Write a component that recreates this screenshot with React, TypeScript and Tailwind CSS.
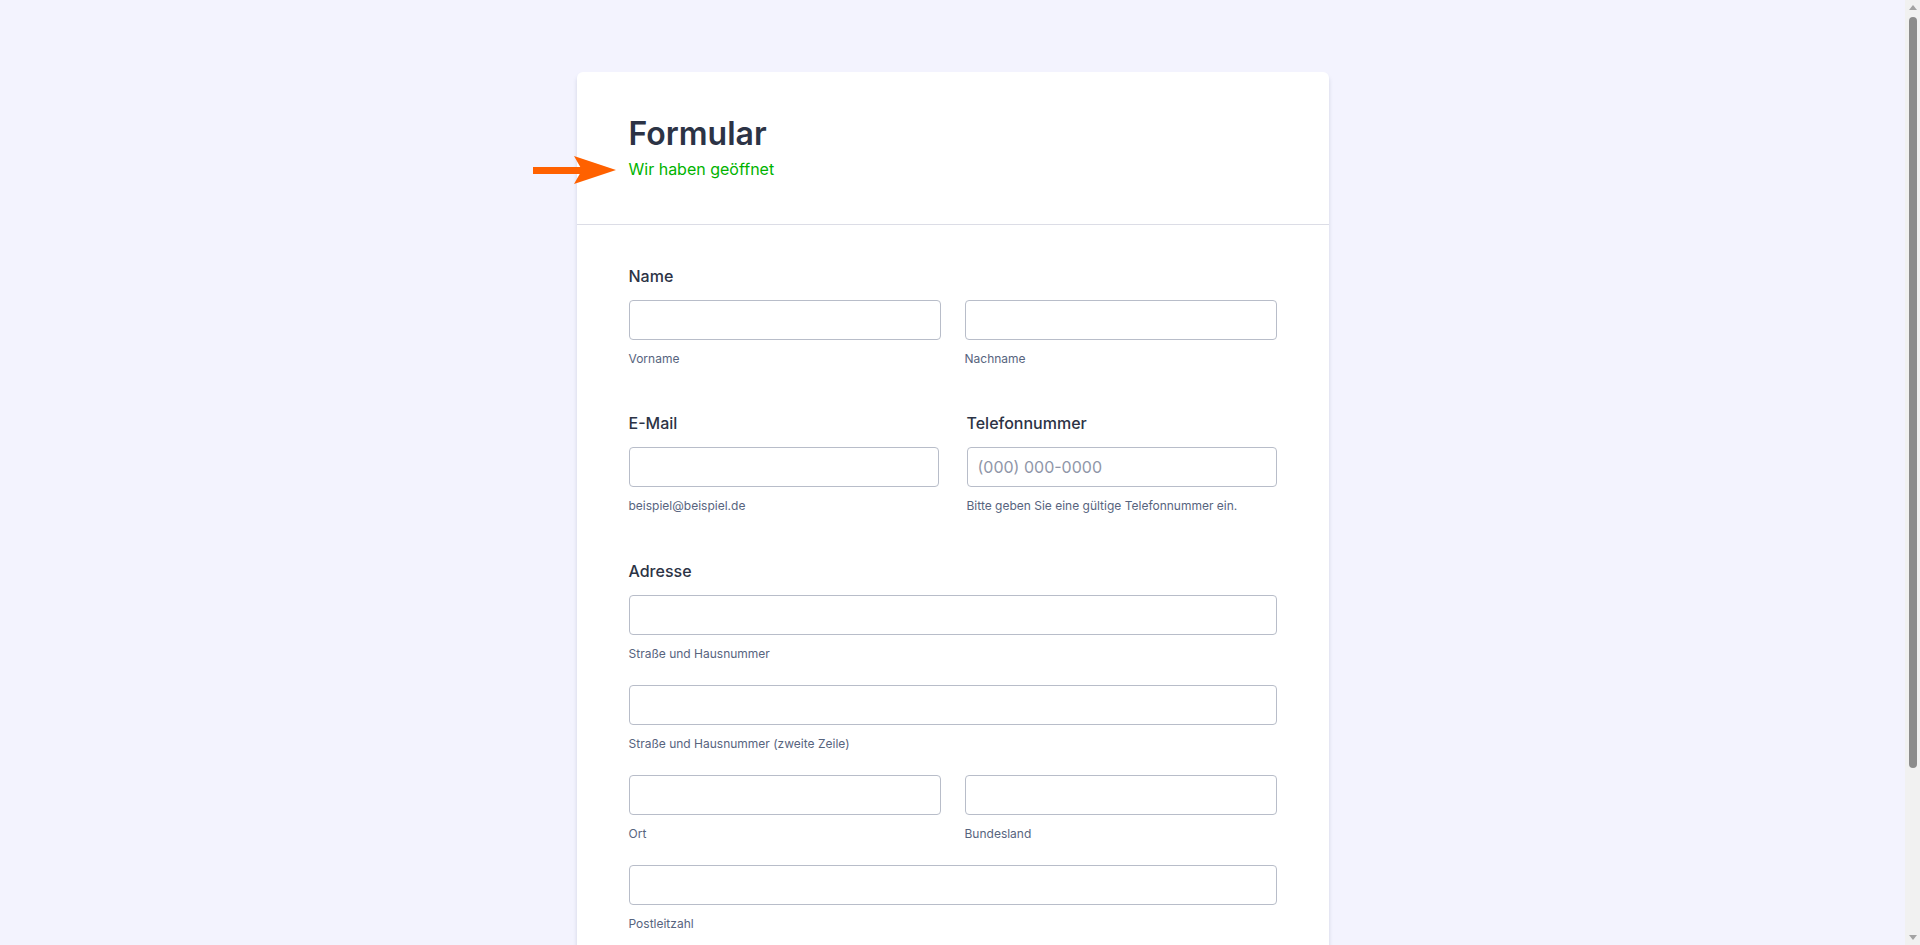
import React from "react";

const font = { fontFamily: "Inter, 'Noto Sans', Arial, sans-serif" };

function Field({ sub, placeholder }: { sub: string; placeholder?: string }) {
  return (
    <div className="flex flex-col">
      <input
        type="text"
        placeholder={placeholder}
        className="h-10 w-full rounded-[4px] border border-[#b8bdc9] bg-white px-[10px] text-base text-[#2c3345] placeholder:text-[#8f96a8] outline-none"
      />
      <span className="mt-[10px] text-xs leading-[18px] text-[#57647e]">{sub}</span>
    </div>
  );
}

function Label({ children }: { children: React.ReactNode }) {
  return <label className="mb-[12px] block text-base font-medium leading-6 text-[#2c3345]">{children}</label>;
}

function Arrow() {
  return (
    <svg
      className="absolute left-[-46px] top-[84px]"
      width="86"
      height="28"
      viewBox="0 0 86 28"
      aria-hidden="true"
    >
      <rect x="2" y="11" width="50" height="7" fill="#ff6100" />
      <polygon points="43,0 85,14 43,28 51,14" fill="#ff6100" />
    </svg>
  );
}

// the reference shows a classic browser scrollbar on the right
function Scrollbar() {
  return (
    <div className="fixed right-0 top-0 flex h-screen w-[15px] flex-col items-center bg-[#f1f1f1]">
      <div className="mt-[5px] h-0 w-0 border-x-[4px] border-b-[5px] border-x-transparent border-b-[#a3a3a3]" />
      <div className="mt-[7px] h-[751px] w-[8px] rounded-full bg-[#8c8c8c]" />
      <div className="mt-auto mb-[5px] h-0 w-0 border-x-[4px] border-t-[5px] border-x-transparent border-t-[#a3a3a3]" />
    </div>
  );
}

export default function App() {
  return (
    <div className="min-h-screen bg-[#f3f3fe] pt-[72px] pb-[60px] pr-[15px]" style={font}>
      <div className="mx-auto w-[752px] rounded-t-[6px] bg-white shadow-[0_4px_4px_rgba(87,100,126,0.21)]">
        <div className="relative border-b border-[#dcdde6] px-[52px] pt-[42px] pb-[43px]">
          <Arrow />
          <h1 className="text-[32px] font-semibold leading-10 text-[#2c3345]">Formular</h1>
          <p className="mt-[3px] text-base leading-6 text-[#00b300]">Wir haben geöffnet</p>
        </div>

        <div className="px-[52px] pt-[39px] pb-[80px]">
          <section>
            <Label>Name</Label>
            <div className="grid grid-cols-2 gap-6">
              <Field sub="Vorname" />
              <Field sub="Nachname" />
            </div>
          </section>

          <section className="mt-[43px] grid grid-cols-2 gap-x-[28px]">
            <div>
              <Label>E-Mail</Label>
              <Field sub="beispiel@beispiel.de" />
            </div>
            <div>
              <Label>Telefonnummer</Label>
              <Field sub="Bitte geben Sie eine gültige Telefonnummer ein." placeholder="(000) 000-0000" />
            </div>
          </section>

          <section className="mt-[44px] flex flex-col gap-[22px]">
            <div>
              <Label>Adresse</Label>
              <Field sub="Straße und Hausnummer" />
            </div>
            <Field sub="Straße und Hausnummer (zweite Zeile)" />
            <div className="grid grid-cols-2 gap-x-6">
              <Field sub="Ort" />
              <Field sub="Bundesland" />
            </div>
            <Field sub="Postleitzahl" />
          </section>

          <div className="mt-[48px] flex justify-center">
            <button className="h-10 rounded-[4px] bg-[#18bd5b] px-8 text-base font-medium text-white">Senden</button>
          </div>
        </div>
      </div>
      <Scrollbar />
    </div>
  );
}
